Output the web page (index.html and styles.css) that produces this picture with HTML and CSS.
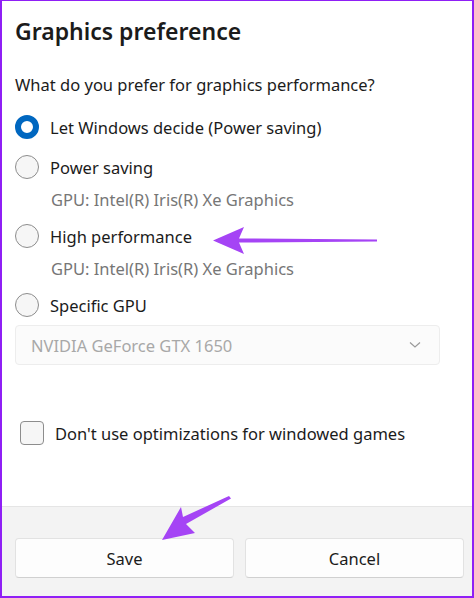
FILE: index.html
```html
<!DOCTYPE html>
<html lang="en">
<head>
    <meta charset="UTF-8">
    <title>Graphics preference</title>
    <link rel="stylesheet" href="styles.css">
</head>
<body>

<div id="dialog">
    <div class="content">
        <h1>Graphics preference</h1>
        <p class="question">What do you prefer for graphics performance?</p>

        <div class="option">
            <span class="radio checked"></span>
            <span>Let Windows decide (Power saving)</span>
        </div>
        <div class="option">
            <span class="radio"></span>
            <span>Power saving</span>
        </div>
        <div class="gpu">GPU: Intel(R) Iris(R) Xe Graphics</div>
        <div class="option">
            <span class="radio"></span>
            <span>High performance</span>
        </div>
        <div class="gpu">GPU: Intel(R) Iris(R) Xe Graphics</div>
        <div class="option">
            <span class="radio"></span>
            <span>Specific GPU</span>
        </div>

        <div class="select">
            <span>NVIDIA GeForce GTX 1650</span>
            <svg width="12" height="8" viewBox="0 0 12 8"><path d="M1 1.5 L6 6 L11 1.5" fill="none" stroke="#9a9a9a" stroke-width="1.2"/></svg>
        </div>

        <div class="check-row">
            <span class="checkbox"></span>
            <span>Don't use optimizations for windowed games</span>
        </div>
    </div>

    <div class="footer">
        <button>Save</button>
        <button>Cancel</button>
    </div>

    <!-- annotation arrows -->
    <svg class="arrow arrow-one" width="170" height="32" viewBox="0 0 170 32">
        <path d="M0 14.5 L31 1 L26 12.5 L164 13.5 L164 15.5 L26 16.5 L31 28 Z" fill="#a544f5"/>
    </svg>
    <svg class="arrow arrow-two" width="72" height="46" viewBox="0 0 72 46">
        <path d="M0 44 L19 11 L21 21 L67 0 L69 2.5 L24 28 L33 37 Z" fill="#a544f5"/>
    </svg>
</div>

</body>
</html>
```

FILE: styles.css
```css
body {
    margin: 0;
    padding: 0;
    font-family: "Noto Sans", "Open Sans", sans-serif;
    color: #1b1b1b;
    background-color: #fff;
}

#dialog {
    position: relative;
    width: 470px;
    height: 595px;
    border: 2px solid #8f1ff5;
    border-top-width: 1px;
    display: flex;
    flex-direction: column;
    background-color: #fff;
}

.content {
    flex: 1;
    padding: 0 13px;
    font-size: 16.5px;
}

h1 {
    margin: 13px 0 0;
    font-size: 23px;
    font-weight: 600;
    line-height: 34px;
}

.question {
    margin: 26px 0 11px;
    line-height: 22px;
}

.option {
    display: flex;
    align-items: center;
    gap: 11px;
    height: 40px;
}

.radio {
    width: 24px;
    height: 24px;
    box-sizing: border-box;
    border-radius: 50%;
    border: 1px solid #8d8d8d;
    background-color: #f6f6f6;
}

.radio.checked {
    border: 6.5px solid #0067c0;
    background-color: #fff;
}

.gpu {
    margin: -1px 0 2px 36px;
    height: 28px;
    line-height: 28px;
    color: #767676;
}

.select {
    display: flex;
    align-items: center;
    justify-content: space-between;
    width: 425px;
    height: 40px;
    box-sizing: border-box;
    padding: 0 18px 0 15px;
    border: 1px solid #ededed;
    border-radius: 4px;
    background-color: #fbfbfb;
    color: #a8a8a8;
}

.check-row {
    display: flex;
    align-items: center;
    gap: 11px;
    margin: 56px 0 0 5px;
}

.checkbox {
    width: 24px;
    height: 24px;
    box-sizing: border-box;
    border: 1px solid #8d8d8d;
    border-radius: 4px;
    background-color: #f6f6f6;
}

.footer {
    height: 90px;
    display: flex;
    align-items: flex-end;
    gap: 11px;
    padding: 0 8px 18px 13px;
    box-sizing: border-box;
    background-color: #f3f3f3;
    border-top: 1px solid #e5e5e5;
}

.footer button {
    flex: 1;
    height: 40px;
    border: 1px solid #e2e2e2;
    border-bottom-color: #d0d0d0;
    border-radius: 4px;
    background-color: #fdfdfd;
    color: #1b1b1b;
    font-family: "Noto Sans", "Open Sans", sans-serif;
    font-size: 16.5px;
}

.arrow {
    position: absolute;
}

.arrow-one {
    left: 211px;
    top: 225px;
}

.arrow-two {
    left: 160px;
    top: 495px;
}
```
